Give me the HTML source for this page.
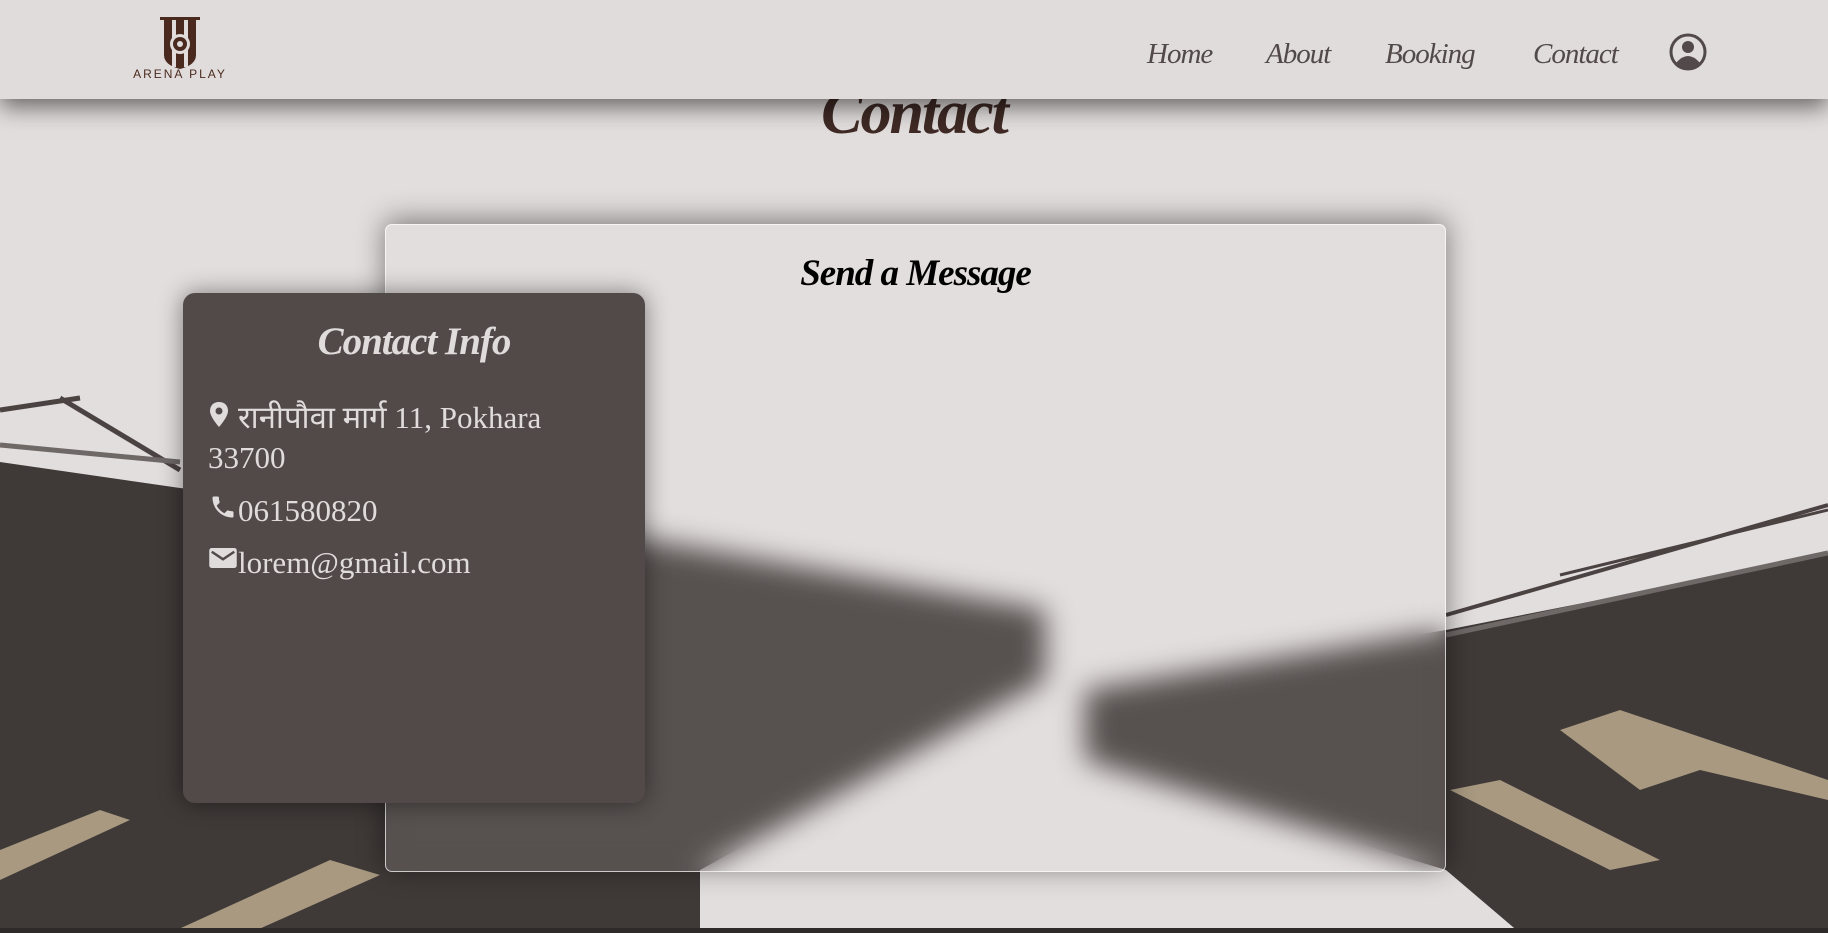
<!DOCTYPE html>
<html><head><meta charset="utf-8"><style>
*{margin:0;padding:0;box-sizing:border-box}
body{width:1828px;height:933px;overflow:hidden;background:#e2dedd;position:relative;font-family:"Liberation Serif","Noto Serif CJK SC",serif}
.bg{position:absolute;left:0;top:0}
nav{position:absolute;left:0;top:0;width:1828px;height:99px;background:#e0dcdb;box-shadow:0 8px 22px rgba(0,0,0,.55);z-index:5}
nav a{position:absolute;top:38px;font-size:29px;font-style:italic;color:#514a49;text-decoration:none;letter-spacing:-1px}
h1{position:absolute;left:0;width:1828px;text-align:center;top:78px;font-size:62px;font-style:italic;font-weight:bold;color:#3f2a25;letter-spacing:-2px}
.card{position:absolute;left:385px;top:224px;width:1061px;height:648px;border-radius:7px;border:1px solid rgba(255,255,255,.7);background:rgba(226,222,221,.15);backdrop-filter:blur(14px);box-shadow:0 -4px 28px rgba(0,0,0,.45)}
.card h2{text-align:center;margin-top:27px;font-size:37px;font-style:italic;font-weight:bold;color:#000;letter-spacing:-1px}
.info{position:absolute;left:183px;top:293px;width:462px;height:510px;border-radius:12px;background:#514a49;box-shadow:0 0 24px rgba(0,0,0,.45);color:#e0dcdb;z-index:3}
.info h3{text-align:center;margin-top:26px;font-size:39px;font-style:italic;font-weight:bold;letter-spacing:-1px}
.info p{position:absolute;left:25px;font-size:31px;line-height:40px;font-family:"Liberation Serif","Noto Serif CJK SC","Noto Sans CJK SC",serif}
</style></head><body>
<svg class="bg" width="1828" height="933" viewBox="0 0 1828 933">
<polygon points="0,462 180,488 650,540 1045,610 1045,680 700,870 700,933 0,933" fill="#3f3937"/>
<line x1="0" y1="410" x2="80" y2="398" stroke="#4a4341" stroke-width="5"/>
<line x1="60" y1="398" x2="180" y2="470" stroke="#4a4341" stroke-width="5"/>
<line x1="0" y1="445" x2="180" y2="462" stroke="#6e6866" stroke-width="5"/>
<polygon points="1085,690 1446,630 1828,555 1828,933 1520,933 1446,870 1085,760" fill="#3f3937"/>
<line x1="1446" y1="635" x2="1828" y2="553" stroke="#6e6866" stroke-width="5"/>
<line x1="1446" y1="615" x2="1828" y2="505" stroke="#4a4341" stroke-width="4"/>
<line x1="1560" y1="575" x2="1828" y2="510" stroke="#4a4341" stroke-width="3"/>
<polygon points="1560,730 1620,710 1828,780 1828,800 1700,770 1640,790" fill="#a89980"/>
<polygon points="1450,790 1500,780 1660,860 1610,870" fill="#a89980"/>
<polygon points="0,850 100,810 130,820 0,880" fill="#a89980"/>
<polygon points="170,933 330,860 380,875 250,933" fill="#a89980"/>
<rect x="0" y="928" width="1828" height="5" fill="#2e2a29"/>
</svg>
<nav>
<svg style="position:absolute;left:130px;top:15px" width="100" height="66" viewBox="0 0 100 66">
<rect x="30" y="2" width="40" height="3" fill="#4a2a1f"/>
<path d="M34 5 V40 Q34 50 50 54 Q66 50 66 40 V5 Z" fill="#4a2a1f"/>
<rect x="42" y="5" width="4" height="47" fill="#e0dcdb"/><rect x="54" y="5" width="4" height="47" fill="#e0dcdb"/>
<circle cx="50" cy="29" r="10" fill="#e0dcdb"/><circle cx="50" cy="29" r="7" fill="#4a2a1f"/><circle cx="50" cy="29" r="3" fill="#e0dcdb"/>
<text x="50" y="63" text-anchor="middle" font-family="Liberation Sans" font-size="12" letter-spacing="2" fill="#4a2a1f">ARENA PLAY</text>
</svg>
<a style="left:1147px">Home</a>
<a style="left:1266px">About</a>
<a style="left:1385px">Booking</a>
<a style="left:1533px">Contact</a>
<svg style="position:absolute;left:1669px;top:33px" width="38" height="38" viewBox="0 0 38 38">
<circle cx="19" cy="19" r="17" fill="none" stroke="#514a49" stroke-width="3"/>
<circle cx="19" cy="14" r="6" fill="#514a49"/>
<path d="M7 30 Q19 16 31 30 Q19 40 7 30Z" fill="#514a49"/>
</svg>
</nav>
<h1>Contact</h1>
<div class="card"><h2>Send a Message</h2></div>
<div class="info"><h3>Contact Info</h3>
<p style="top:105px">
<svg width="22" height="30" viewBox="0 0 22 30" style="vertical-align:-2px;margin-right:8px"><path d="M11 2 C5 2 2 6 2 11 C2 17 11 27 11 27 C11 27 20 17 20 11 C20 6 17 2 11 2Z" fill="#e0dcdb"/><circle cx="11" cy="11" r="3.5" fill="#514a49"/></svg>रानीपौवा मार्ग 11, Pokhara<br>33700</p>
<p style="top:198px"><svg width="30" height="28" viewBox="0 0 24 24" style="vertical-align:0"><path d="M6.6 10.8c1.4 2.8 3.8 5.1 6.6 6.6l2.2-2.2c.3-.3.7-.4 1-.2 1.1.4 2.3.6 3.6.6.6 0 1 .4 1 1V20c0 .6-.4 1-1 1C10.6 21 3 13.4 3 4c0-.6.4-1 1-1h3.5c.6 0 1 .4 1 1 0 1.3.2 2.5.6 3.6.1.3 0 .7-.2 1z" fill="#e0dcdb"/></svg>061580820</p>
<p style="top:250px"><svg width="30" height="26" viewBox="0 0 24 20" style="vertical-align:2px"><rect x="1" y="2" width="22" height="16" rx="2" fill="#e0dcdb"/><path d="M3 5 L12 11 L21 5" fill="none" stroke="#514a49" stroke-width="2"/></svg>lorem@gmail.com</p>
</div>
</body></html>
